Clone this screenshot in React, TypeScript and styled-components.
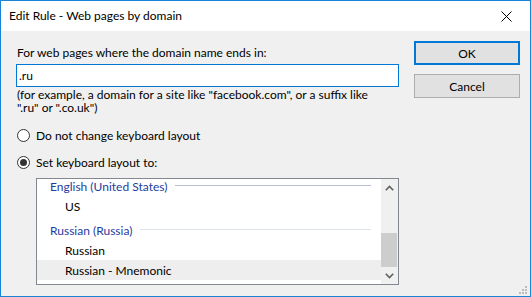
import React from "react";
import styled, { createGlobalStyle } from "styled-components";

const Global = createGlobalStyle`
  html, body { margin: 0; padding: 0; background: #ffffff; }
  body { font-family: Lato, "Noto Sans", "Liberation Sans", Arial, sans-serif; font-size: 12px; color: #000; }
  * { box-sizing: border-box; }
`;

const Window = styled.div`
  width: 531px;
  height: 297px;
  border: 1px solid #1883d7;
  display: flex;
  flex-direction: column;
  background: #f0f0f0;
  overflow: hidden;
`;

const TitleBar = styled.div`
  height: 30px;
  flex: none;
  background: #ffffff;
  display: flex;
  align-items: center;
  padding-left: 8px;
`;

const TitleText = styled.div`
  font-size: 12px;
  line-height: 15px;
  color: #000;
  flex: 1;
  margin-top: -1px;
`;

const CloseBox = styled.div`
  width: 46px;
  height: 30px;
  display: flex;
  align-items: center;
  justify-content: center;
  margin-right: 1px;
`;

const Body = styled.div`
  flex: 1;
  display: flex;
  align-items: flex-start;
  padding: 10px 10px 0 15px;
  position: relative;
`;

const LeftColumn = styled.div`
  width: 383px;
  flex: none;
  display: flex;
  flex-direction: column;
`;

const RightColumn = styled.div`
  width: 106px;
  flex: none;
  margin-left: 15px;
  display: flex;
  flex-direction: column;
`;

const Button = styled.div<{ $default?: boolean }>`
  height: 24px;
  background: #e1e1e1;
  border: ${(p) => (p.$default ? "2px solid #0078d7" : "1px solid #adadad")};
  display: flex;
  align-items: center;
  justify-content: center;
  font-size: 12px;
  color: #000;
  & + & { margin-top: 9px; }
`;

const Label = styled.div`
  margin-top: 4px;
  line-height: 15px;
  padding-left: 1px;
  margin-bottom: 4px;
  white-space: nowrap;
`;

const TextInput = styled.div`
  height: 23px;
  border: 1px solid #0078d7;
  background: #ffffff;
  display: flex;
  align-items: center;
  padding-left: 2px;
`;

const Hint = styled.div`
  margin-top: 1px;
  line-height: 13px;
  padding-left: 1px;
  white-space: nowrap;
`;

const RadioRow = styled.div<{ $gap: number }>`
  margin-top: ${(p) => p.$gap}px;
  height: 15px;
  display: flex;
  align-items: center;
  padding-left: 1px;
  gap: 6px;
`;

const RadioCircle = styled.span<{ $checked?: boolean }>`
  width: 13px;
  height: 13px;
  border-radius: 50%;
  border: 1px solid #333333;
  background: #ffffff;
  display: flex;
  align-items: center;
  justify-content: center;
  flex: none;
  &::after {
    content: "";
    display: ${(p) => (p.$checked ? "block" : "none")};
    width: 7px;
    height: 7px;
    border-radius: 50%;
    background: #333333;
  }
`;

const ListBox = styled.div`
  margin-top: 8px;
  margin-left: 20px;
  height: 107px;
  border: 1px solid #828790;
  background: #ffffff;
  display: flex;
  overflow: hidden;
`;

const ListViewport = styled.div`
  flex: 1;
  overflow: hidden;
`;

const ListContent = styled.div<{ $offset: number }>`
  margin-top: ${(p) => -p.$offset}px;
  display: flex;
  flex-direction: column;
`;

const GroupHeader = styled.div<{ $lineColor: string }>`
  height: 24px;
  padding: 4px 10px 0 13px;
  display: flex;
  align-items: center;
  color: #1e3c9e;
  white-space: nowrap;
  &::after {
    content: "";
    flex: 1;
    height: 1px;
    margin-left: 8px;
    margin-top: -2px;
    background: ${(p) => p.$lineColor};
  }
`;

const ItemRow = styled.div<{ $selected?: boolean }>`
  height: 20px;
  padding-left: 28px;
  display: flex;
  align-items: center;
  background: ${(p) => (p.$selected ? "#eeeeee" : "transparent")};
`;

const ScrollBar = styled.div`
  width: 17px;
  flex: none;
  background: #f0f0f0;
  display: flex;
  flex-direction: column;
`;

const ScrollArrow = styled.div`
  height: 17px;
  flex: none;
  display: flex;
  align-items: center;
  justify-content: center;
`;

const ScrollTrack = styled.div`
  flex: 1;
  display: flex;
  flex-direction: column;
  justify-content: flex-end;
`;

const ScrollThumb = styled.div`
  height: 34px;
  margin: 0 1px 0 0;
  background: #cdcdcd;
`;

const Grip = styled.div`
  position: absolute;
  right: 1px;
  bottom: 1px;
  width: 11px;
  height: 11px;
`;

const Chevron = ({ up }: { up?: boolean }) => (
  <svg width="9" height="6" viewBox="0 0 9 6">
    <path
      d={up ? "M0.8 5.2 L4.5 1.5 L8.2 5.2" : "M0.8 0.8 L4.5 4.5 L8.2 0.8"}
      fill="none"
      stroke="#606060"
      strokeWidth="1.6"
    />
  </svg>
);

const groups = [
  { name: "English (United States)", line: "#b4bfd4", items: ["US"] },
  { name: "Russian (Russia)", line: "#dde3ec", items: ["Russian", "Russian - Mnemonic"] },
];

const gripDots: [number, number][] = [
  [6, 0],
  [3, 3],
  [6, 3],
  [0, 6],
  [3, 6],
  [6, 6],
];

export default function App() {
  return (
    <>
      <Global />
      <Window>
        <TitleBar>
          <TitleText>Edit Rule - Web pages by domain</TitleText>
          <CloseBox>
            <svg width="11" height="11" viewBox="0 0 11 11">
              <path d="M0.5 0.5 L10.5 10.5 M10.5 0.5 L0.5 10.5" stroke="#000" strokeWidth="1" />
            </svg>
          </CloseBox>
        </TitleBar>
        <Body>
          <LeftColumn>
            <Label>For web pages where the domain name ends in:</Label>
            <TextInput>.ru</TextInput>
            <Hint>
              (for example, a domain for a site like "facebook.com", or a suffix like
              <br />
              ".ru" or ".co.uk")
            </Hint>
            <RadioRow $gap={14}>
              <RadioCircle />
              <span>Do not change keyboard layout</span>
            </RadioRow>
            <RadioRow $gap={12}>
              <RadioCircle $checked />
              <span>Set keyboard layout to:</span>
            </RadioRow>
            <ListBox>
              <ListViewport>
                <ListContent $offset={7}>
                  {groups.map((g) => (
                    <React.Fragment key={g.name}>
                      <GroupHeader $lineColor={g.line}>{g.name}</GroupHeader>
                      {g.items.map((it) => (
                        <ItemRow key={it} $selected={it === "Russian - Mnemonic"}>
                          {it}
                        </ItemRow>
                      ))}
                    </React.Fragment>
                  ))}
                </ListContent>
              </ListViewport>
              <ScrollBar>
                <ScrollArrow>
                  <Chevron up />
                </ScrollArrow>
                <ScrollTrack>
                  <ScrollThumb />
                </ScrollTrack>
                <ScrollArrow>
                  <Chevron />
                </ScrollArrow>
              </ScrollBar>
            </ListBox>
          </LeftColumn>
          <RightColumn>
            <Button $default>OK</Button>
            <Button>Cancel</Button>
          </RightColumn>
          <Grip>
            <svg width="11" height="11" viewBox="0 0 11 11">
              {gripDots.map(([x, y]) => (
                <rect key={`${x}-${y}`} x={x + 1} y={y + 1} width="2" height="2" fill="#bcbcbc" />
              ))}
            </svg>
          </Grip>
        </Body>
      </Window>
    </>
  );
}
